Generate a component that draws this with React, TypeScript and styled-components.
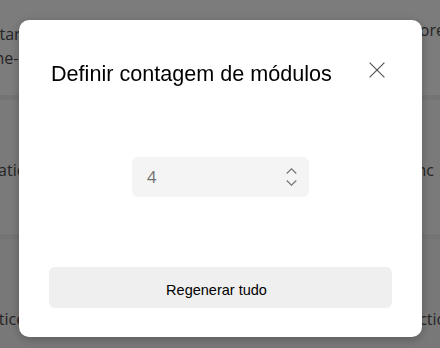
import React from "react";
import styled, { createGlobalStyle } from "styled-components";

const Global = createGlobalStyle`
  html, body { margin: 0; padding: 0; }
  body {
    width: 440px;
    height: 348px;
    overflow: hidden;
    font-family: "Liberation Sans", Arial, sans-serif;
  }
`;

const Page = styled.div`
  width: 440px;
  height: 348px;
  overflow: hidden;
  display: flex;
  flex-direction: column;
  font-family: "Open Sans", "Noto Sans", sans-serif;
  font-size: 16px;
  color: #4a4a4a;
`;

const BgRow = styled.div<{ $h: number; $bg: string }>`
  height: ${(p) => p.$h}px;
  background: ${(p) => p.$bg};
  border-bottom: 5px solid #e9e9e9;
  display: flex;
  justify-content: space-between;
  align-items: flex-start;
  flex-shrink: 0;
`;

const BgCol = styled.div<{ $top: number; $shift: number }>`
  padding-top: ${(p) => p.$top}px;
  margin-left: ${(p) => p.$shift}px;
  margin-right: ${(p) => p.$shift}px;
  display: flex;
  flex-direction: column;
  align-items: flex-start;
  line-height: 24px;
  white-space: nowrap;
`;

const Overlay = styled.div`
  position: fixed;
  inset: 0;
  background: rgba(0, 0, 0, 0.5);
`;

const Dialog = styled.div`
  position: absolute;
  left: 19px;
  top: 20px;
  width: 403px;
  height: 317px;
  box-sizing: border-box;
  background: #fff;
  border-radius: 10px;
  box-shadow: 0 2px 10px rgba(0, 0, 0, 0.25);
  padding: 40px 30px 29px;
  display: flex;
  flex-direction: column;
`;

const Header = styled.div`
  display: flex;
  justify-content: space-between;
  align-items: flex-start;
  height: 28px;
`;

const Title = styled.h2`
  margin: 0 0 0 2px;
  font-family: "Liberation Sans", Arial, sans-serif;
  font-weight: 400;
  font-size: 21.6px;
  line-height: 28px;
  color: #000;
`;

const CloseButton = styled.button`
  width: 30px;
  height: 30px;
  margin-top: -5px;
  padding: 0;
  border: none;
  background: transparent;
  display: flex;
  align-items: center;
  justify-content: center;
`;

const Body = styled.div`
  flex: 1;
  display: flex;
  align-items: center;
  justify-content: center;
`;

const Spin = styled.div`
  width: 177px;
  height: 40px;
  box-sizing: border-box;
  background: #f4f4f4;
  border-radius: 6px;
  display: flex;
  align-items: center;
  padding: 0 12px 0 15px;
  margin-bottom: 1px;
`;

const SpinValue = styled.span`
  flex: 1;
  font-family: "Open Sans", "Noto Sans", sans-serif;
  font-size: 16.5px;
  color: #707070;
  line-height: 20px;
`;

const SpinArrows = styled.div`
  display: flex;
  flex-direction: column;
  align-items: center;
  gap: 6px;
`;

const Arrow = styled.svg`
  display: block;
`;

const Footer = styled.button`
  height: 41px;
  width: 100%;
  border: none;
  border-radius: 6px;
  background: #efefef;
  font-family: "Liberation Sans", Arial, sans-serif;
  font-size: 14.5px;
  color: #000;
  padding: 4px 8px 0 0;
`;

export default function App() {
  return (
    <>
      <Global />
      <Page>
        <BgRow $h={95} $bg="#f9f9f9">
          <BgCol $top={22} $shift={-30}>
            <span>Contar</span>
            <span>nome-serviço</span>
          </BgCol>
          <BgCol $top={18} $shift={-5}>
            <span>Explore</span>
          </BgCol>
        </BgRow>
        <BgRow $h={134} $bg="#f4f4f4">
          <BgCol $top={58} $shift={-52}>
            <span>Automatic</span>
          </BgCol>
          <BgCol $top={58} $shift={6}>
            <span>Sync</span>
          </BgCol>
        </BgRow>
        <BgRow $h={120} $bg="#f0f0f0">
          <BgCol $top={68} $shift={-34}>
            <span>Practice</span>
          </BgCol>
          <BgCol $top={68} $shift={-16}>
            <span>Action</span>
          </BgCol>
        </BgRow>
      </Page>
      <Overlay>
        <Dialog role="dialog">
          <Header>
            <Title>Definir contagem de módulos</Title>
            <CloseButton aria-label="Fechar">
              <svg width="16" height="16" viewBox="0 0 16 16">
                <path d="M0.6 0.6 L15.4 15.4 M15.4 0.6 L0.6 15.4" stroke="#555" strokeWidth="1.2" fill="none" />
              </svg>
            </CloseButton>
          </Header>
          <Body>
            <Spin>
              <SpinValue>4</SpinValue>
              <SpinArrows>
                <Arrow width="11" height="6" viewBox="0 0 11 6">
                  <polyline points="0.7,5.5 5.5,0.8 10.3,5.5" stroke="#777" strokeWidth="1.2" fill="none" />
                </Arrow>
                <Arrow width="11" height="6" viewBox="0 0 11 6">
                  <polyline points="0.7,0.5 5.5,5.2 10.3,0.5" stroke="#777" strokeWidth="1.2" fill="none" />
                </Arrow>
              </SpinArrows>
            </Spin>
          </Body>
          <Footer>Regenerar tudo</Footer>
        </Dialog>
      </Overlay>
    </>
  );
}
